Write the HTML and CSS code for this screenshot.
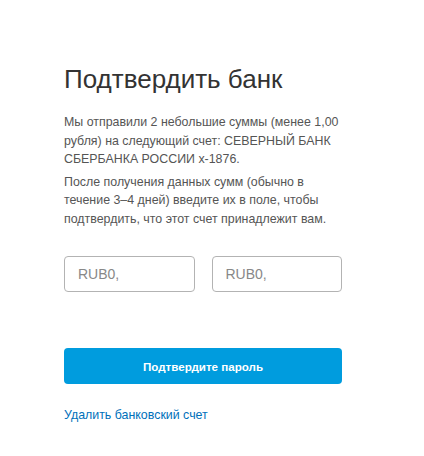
FILE: index.html
```html
<!DOCTYPE html>
<html lang="ru">
<head>
    <meta charset="UTF-8">
    <meta name="viewport" content="width=device-width, initial-scale=1.0">
    <title>Подтвердить банк</title>
    <link rel="stylesheet" href="styles.css">
</head>
<body>
    <div class="confirm-container">
        <h1>Подтвердить банк</h1>

        <p class="note">Мы отправили 2 небольшие суммы (менее 1,00 рубля) на следующий счет: СЕВЕРНЫЙ БАНК СБЕРБАНКА РОССИИ x-1876.</p>
        <p class="note">После получения данных сумм (обычно в течение 3–4 дней) введите их в поле, чтобы подтвердить, что этот счет принадлежит вам.</p>

        <form id="confirmForm">
            <div class="amount-row">
                <input type="text" class="amount" placeholder="RUB0,">
                <input type="text" class="amount" placeholder="RUB0,">
            </div>

            <button type="submit" class="btn">Подтвердите пароль</button>
        </form>

        <a href="#" class="remove-link">Удалить банковский счет</a>
    </div>
</body>
</html>
```

FILE: styles.css
```css
* {
    margin: 0;
    padding: 0;
    box-sizing: border-box;
}

body {
    font-family: "Liberation Sans", Arial, sans-serif;
    background: white;
    color: #555;
}

.confirm-container {
    width: 278px;
    margin-left: 64px;
    padding-top: 63px;
}

.confirm-container h1 {
    color: #333;
    font-size: 26px;
    font-weight: 400;
    line-height: 32px;
    margin-bottom: 18px;
}

.note {
    font-size: 12.4px;
    line-height: 18.5px;
    margin-bottom: 4px;
}

.amount-row {
    display: flex;
    gap: 17px;
    margin-top: 28px;
}

.amount {
    flex: 1;
    min-width: 0;
    width: 0;
    height: 36px;
    padding: 0 13px;
    border: 1px solid #b3b3b3;
    border-radius: 4px;
    font-family: inherit;
    font-size: 14px;
    color: #333;
}

.amount::placeholder {
    color: #888;
}

.btn {
    display: block;
    width: 100%;
    height: 36px;
    margin-top: 56px;
    background: #009cde;
    color: white;
    border: none;
    border-radius: 4px;
    font-family: inherit;
    font-size: 11.6px;
    font-weight: 600;
    cursor: pointer;
}

.remove-link {
    display: inline-block;
    margin-top: 24px;
    color: #0070ba;
    font-size: 12.4px;
    text-decoration: none;
}
```
